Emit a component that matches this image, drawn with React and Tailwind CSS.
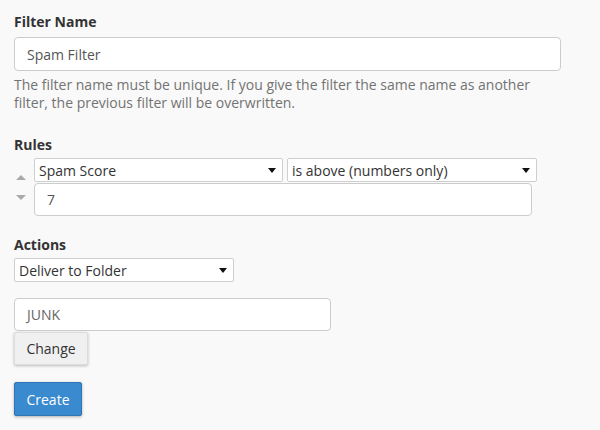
import React from "react";

function Caret() {
  return (
    <svg width="8" height="5" viewBox="0 0 8 5" className="shrink-0">
      <path d="M0 0 L8 0 L4 5 Z" fill="#111" />
    </svg>
  );
}

function Select({ value, className }) {
  return (
    <div
      className={
        "flex h-[24px] items-center justify-between border border-[#cfcfcf] bg-white pl-[4px] pr-[6px] text-[14px] text-[#333] rounded-[2px] " +
        className
      }
    >
      <span>{value}</span>
      <Caret />
    </div>
  );
}

export default function App() {
  return (
    <div
      className="min-h-[430px] w-[600px] bg-[#f9f9f9] px-[14px] pt-[12px] text-[#333]"
      style={{ fontFamily: '"Open Sans", "Noto Sans", sans-serif' }}
    >
      <div className="text-[14px] font-bold leading-[20px]">Filter Name</div>
      <div className="mt-[5px] flex h-[34px] w-[547px] items-center rounded-[4px] border border-[#cccccc] bg-white px-[12px] text-[14px] text-[#555]">
        Spam Filter
      </div>
      <p className="mt-[5px] w-[540px] text-[14px] leading-[18px] text-[#737373]">
        The filter name must be unique. If you give the filter the same name as another filter, the previous filter will be overwritten.
      </p>

      <div className="mt-[23px] text-[14px] font-bold leading-[20px]">Rules</div>
      <div className="mt-[3px] flex">
        <div className="flex w-[20px] flex-col items-start pl-[2px] pt-[17px]">
          <svg width="10" height="5" viewBox="0 0 10 5">
            <path d="M0 5 L10 5 L5 0 Z" fill="#aaa" />
          </svg>
          <svg width="10" height="5" viewBox="0 0 10 5" className="mt-[15px]">
            <path d="M0 0 L10 0 L5 5 Z" fill="#aaa" />
          </svg>
        </div>
        <div className="flex flex-col">
          <div className="flex gap-[4px]">
            <Select value="Spam Score" className="w-[249px]" />
            <Select value="is above (numbers only)" className="w-[250px]" />
          </div>
          <div className="mt-[1px] flex h-[33px] w-[498px] items-center rounded-[4px] border border-[#cccccc] bg-white px-[12px] text-[14px] text-[#555]">
            7
          </div>
        </div>
      </div>

      <div className="mt-[19px] text-[14px] font-bold leading-[20px]">Actions</div>
      <Select value="Deliver to Folder" className="mt-[3px] w-[220px]" />
      <div className="mt-[16px] flex h-[33px] w-[317px] items-center rounded-[4px] border border-[#cccccc] bg-white px-[12px] text-[14px] text-[#666]">
        JUNK
      </div>
      <button className="mt-[1px] flex h-[33px] w-[74px] items-center justify-center rounded-[2px] border border-[#dcdcdc] bg-[#f0f0f0] text-[14px] text-[#333] shadow-[0_1px_3px_rgba(0,0,0,0.25)]">
        Change
      </button>
      <button className="mt-[17px] flex h-[34px] w-[68px] items-center justify-center rounded-[2px] border border-[#2d75b5] bg-[#3a8ad0] text-[14px] text-white shadow-[0_1px_3px_rgba(0,0,0,0.3)]">
        Create
      </button>
    </div>
  );
}
